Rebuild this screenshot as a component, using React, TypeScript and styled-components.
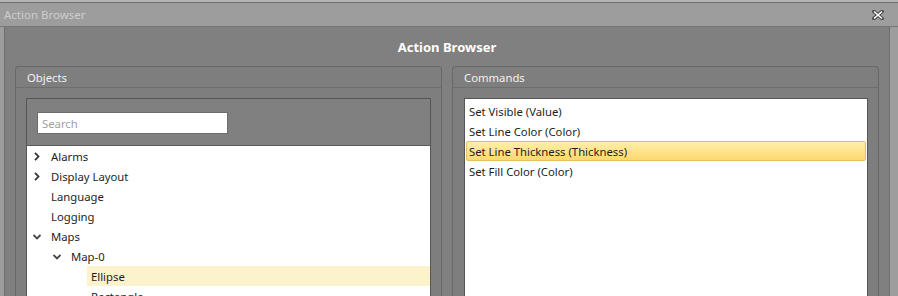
import React from 'react';
import styled, { createGlobalStyle } from 'styled-components';

const GlobalStyle = createGlobalStyle`
  html, body {
    margin: 0;
    padding: 0;
    background: #9d9d9d;
  }
  * {
    box-sizing: border-box;
  }
`;

const Screen = styled.div`
  width: 898px;
  height: 296px;
  overflow: hidden;
  background: #9d9d9d;
  font-family: "Noto Sans", "Open Sans", sans-serif;
  font-size: 11.3px;
  color: #1e1e1e;
`;

const BackStrip = styled.div`
  height: 3px;
  background: #b4b4b4;
  border-bottom: 1px solid #6e6e6e;
`;

const TitleBar = styled.div`
  height: 24px;
  display: flex;
  align-items: center;
  justify-content: space-between;
  padding: 0 14px 0 4px;
  background: #9d9d9d;
  border-bottom: 1px solid #777;
  color: #cdcdcd;
  font-size: 11.5px;
`;

const CloseButton = styled.button`
  border: 0;
  padding: 0;
  background: none;
  display: flex;
  align-items: center;
`;

const Body = styled.div`
  margin: 0 8px 0 4px;
  height: 280px;
  background: #808080;
  border-left: 1px solid #6f6f6f;
  border-right: 1px solid #6f6f6f;
`;

const Heading = styled.div`
  height: 39px;
  display: flex;
  align-items: center;
  justify-content: center;
  color: #ffffff;
  font-weight: 700;
  font-size: 13px;
`;

const Columns = styled.div`
  display: grid;
  grid-template-columns: 427px 427px;
  column-gap: 10px;
  padding-left: 10px;
`;

const Panel = styled.section`
  height: 240px;
  background: #7e7e7e;
  border: 1px solid #686868;
  border-bottom: 0;
  border-radius: 4px 4px 0 0;
`;

const PanelHeader = styled.div`
  height: 21px;
  padding-left: 11px;
  display: flex;
  align-items: center;
  color: #f2f2f2;
  border-bottom: 1px solid #6e6e6e;
`;

const PanelContent = styled.div<{ $left: number; $right: number }>`
  padding: 10px ${p => p.$right}px 0 ${p => p.$left}px;
`;

const ObjectsBox = styled.div`
  border: 1px solid #555;
  border-bottom: 0;
  background: #808080;
`;

const SearchArea = styled.div`
  padding: 13px 0 11px 10px;
  border-bottom: 1px solid #5a5a5a;
`;

const SearchInput = styled.input`
  display: block;
  width: 191px;
  height: 22px;
  padding: 0 4px;
  border: 1px solid #6d6d6d;
  background: #fff;
  font-family: inherit;
  font-size: 11.3px;
  outline: none;
  &::placeholder {
    color: #a0a0a0;
  }
`;

const Tree = styled.div`
  background: #fff;
  height: 160px;
`;

const TreeRow = styled.div<{ $depth: number }>`
  display: flex;
  height: 20px;
  padding-left: ${p => p.$depth * 20}px;
`;

const Expander = styled.div`
  width: 20px;
  padding-top: 1px;
  display: flex;
  align-items: center;
  justify-content: center;
`;

const TreeLabel = styled.div<{ $selected?: boolean }>`
  flex: 1;
  padding: 1px 0 0 4px;
  line-height: 20px;
  background: ${p => (p.$selected ? '#fcf2cc' : 'transparent')};
`;

const CommandList = styled.div`
  height: 200px;
  background: #fff;
  border: 1px solid #555;
  border-bottom: 0;
  padding-top: 2px;
`;

const CommandItem = styled.div<{ $selected?: boolean }>`
  height: 20px;
  margin: 0 1px;
  padding: 1px 0 0 2px;
  line-height: 18px;
  border: 1px solid ${p => (p.$selected ? '#e3c063' : 'transparent')};
  border-radius: 2px;
  background: ${p => (p.$selected ? 'linear-gradient(#feeeaa, #fdd96f)' : 'transparent')};
`;

const Chevron = ({ open }: { open: boolean }) =>
  open ? (
    <svg width="8" height="6" viewBox="0 0 8 6">
      <path d="M0.5 1 L4 4.5 L7.5 1" fill="none" stroke="#444" strokeWidth="1.8" />
    </svg>
  ) : (
    <svg width="6" height="9" viewBox="0 0 6 9">
      <path d="M1 0.8 L4.5 4.5 L1 8.2" fill="none" stroke="#333" strokeWidth="1.8" />
    </svg>
  );

type Node = { label: string; depth: number; expander?: 'open' | 'closed'; selected?: boolean };

const nodes: Node[] = [
  { label: 'Alarms', depth: 0, expander: 'closed' },
  { label: 'Display Layout', depth: 0, expander: 'closed' },
  { label: 'Language', depth: 0 },
  { label: 'Logging', depth: 0 },
  { label: 'Maps', depth: 0, expander: 'open' },
  { label: 'Map-0', depth: 1, expander: 'open' },
  { label: 'Ellipse', depth: 2, selected: true },
  { label: 'Rectangle', depth: 2 },
];

const commands = [
  'Set Visible (Value)',
  'Set Line Color (Color)',
  'Set Line Thickness (Thickness)',
  'Set Fill Color (Color)',
];

const App: React.FC = () => {
  return (
    <Screen>
      <GlobalStyle />
      <BackStrip />
      <TitleBar>
        <span>Action Browser</span>
        <CloseButton aria-label="Close">
          <svg width="12" height="10" viewBox="0 0 12 10">
            <path d="M2 1.5 L10 8.5 M10 1.5 L2 8.5" stroke="#4a4a4a" strokeWidth="3.6" strokeLinecap="square" />
            <path d="M2 1.5 L10 8.5 M10 1.5 L2 8.5" stroke="#fff" strokeWidth="1.6" />
          </svg>
        </CloseButton>
      </TitleBar>
      <Body>
        <Heading>Action Browser</Heading>
        <Columns>
          <Panel>
            <PanelHeader>Objects</PanelHeader>
            <PanelContent $left={10} $right={10}>
              <ObjectsBox>
                <SearchArea>
                  <SearchInput placeholder="Search" />
                </SearchArea>
                <Tree>
                  {nodes.map(node => (
                    <TreeRow key={node.label} $depth={node.depth}>
                      <Expander>
                        {node.expander && <Chevron open={node.expander === 'open'} />}
                      </Expander>
                      <TreeLabel $selected={node.selected}>{node.label}</TreeLabel>
                    </TreeRow>
                  ))}
                </Tree>
              </ObjectsBox>
            </PanelContent>
          </Panel>
          <Panel>
            <PanelHeader>Commands</PanelHeader>
            <PanelContent $left={11} $right={10}>
              <CommandList>
                {commands.map((cmd, i) => (
                  <CommandItem key={cmd} $selected={i === 2}>
                    {cmd}
                  </CommandItem>
                ))}
              </CommandList>
            </PanelContent>
          </Panel>
        </Columns>
      </Body>
    </Screen>
  );
};

export default App;
